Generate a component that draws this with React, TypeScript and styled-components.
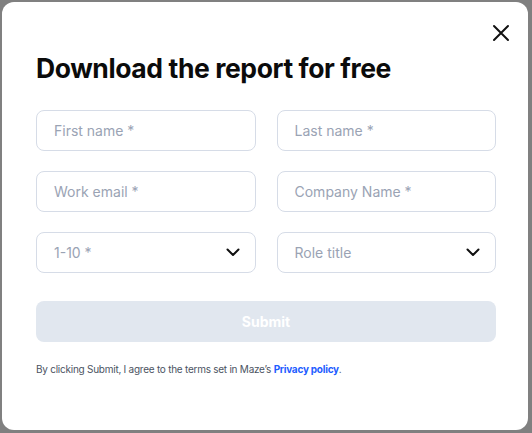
import React from 'react';
import styled, { createGlobalStyle } from 'styled-components';

const GlobalStyle = createGlobalStyle`
    html, body {
        margin: 0;
        padding: 0;
        background-color: #808080;
        font-family: "Inter", "Liberation Sans", sans-serif;
    }
    * {
        box-sizing: border-box;
    }
`

const Page = styled.div`
    width: 532px;
    height: 433px;
    padding: 2px 4px 3px 2px;
`

const Modal = styled.div`
    position: relative;
    width: 100%;
    height: 100%;
    background-color: #ffffff;
    border-radius: 12px;
    padding: 49px 34px 0 34px;
    display: flex;
    flex-direction: column;
`

const CloseButton = styled.button`
    position: absolute;
    top: 19px;
    right: 15px;
    width: 24px;
    height: 24px;
    padding: 0;
    border: none;
    background: none;
    display: flex;
    align-items: center;
    justify-content: center;
    cursor: pointer;
`

const Tittle = styled.h1`
    margin: 0;
    font-size: 26.5px;
    line-height: 34px;
    font-weight: 700;
    letter-spacing: -0.4px;
    color: #0b0b0b;
`

const Form = styled.form`
    margin-top: 25px;
    display: grid;
    grid-template-columns: 1fr 1fr;
    column-gap: 21px;
    row-gap: 20px;
    width: 460px;
`

const Field = styled.div`
    height: 41px;
    border: 1px solid #d6dce7;
    border-radius: 8px;
    padding: 0 15px 0 17px;
    display: flex;
    align-items: center;
    justify-content: space-between;
`

const Placeholder = styled.span`
    font-size: 14px;
    color: #9aa3b4;
`

const SubmitButton = styled.button`
    grid-column: 1 / 3;
    margin-top: 8px;
    height: 41px;
    border: none;
    border-radius: 8px;
    background-color: #e1e7ef;
    color: #ffffff;
    font-family: inherit;
    font-size: 14px;
    font-weight: 700;
`

const Terms = styled.p`
    margin: 21px 0 0 0;
    font-size: 10px;
    color: #4b5362;
    letter-spacing: -0.25px;
`

const Link = styled.a`
    color: #1f5eff;
    font-weight: 700;
    text-decoration: none;
`

const Chevron = () => (
    <svg width="14" height="9" viewBox="0 0 14 9" fill="none">
        <path d="M1.5 1.5L7 7L12.5 1.5" stroke="#111111" strokeWidth="2" strokeLinecap="round" strokeLinejoin="round" />
    </svg>
)

const App = () => {
    const fields = [
        { label: 'First name *' },
        { label: 'Last name *' },
        { label: 'Work email *' },
        { label: 'Company Name *' },
        { label: '1-10 *', select: true },
        { label: 'Role title', select: true },
    ]

    return (
        <Page>
            <GlobalStyle />
            <Modal>
                <CloseButton aria-label="Close">
                    <svg width="18" height="18" viewBox="0 0 18 18" fill="none">
                        <path d="M2 2L16 16M16 2L2 16" stroke="#111111" strokeWidth="2" strokeLinecap="round" />
                    </svg>
                </CloseButton>
                <Tittle>Download the report for free</Tittle>
                <Form>
                    {fields.map(f => (
                        <Field key={f.label}>
                            <Placeholder>{f.label}</Placeholder>
                            {f.select && <Chevron />}
                        </Field>
                    ))}
                    <SubmitButton type="button">Submit</SubmitButton>
                </Form>
                <Terms>
                    By clicking Submit, I agree to the terms set in Maze’s <Link href="#">Privacy policy</Link>.
                </Terms>
            </Modal>
        </Page>
    )
}

export default App
